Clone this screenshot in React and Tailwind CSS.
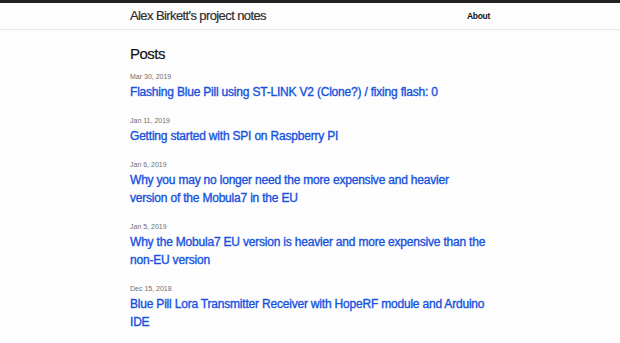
import React from 'react';

const posts = [
  { date: 'Mar 30, 2019', title: 'Flashing Blue Pill using ST-LINK V2 (Clone?) / fixing flash: 0' },
  { date: 'Jan 11, 2019', title: 'Getting started with SPI on Raspberry PI' },
  { date: 'Jan 6, 2019', title: 'Why you may no longer need the more expensive and heavier version of the Mobula7 in the EU' },
  { date: 'Jan 5, 2019', title: 'Why the Mobula7 EU version is heavier and more expensive than the non-EU version' },
  { date: 'Dec 15, 2018', title: 'Blue Pill Lora Transmitter Receiver with HopeRF module and Arduino IDE' },
];

export default function App() {
  return (
    <div className="min-h-screen bg-[#fdfdfd] text-[#111] font-['Liberation_Sans',Arial,sans-serif]">
      {/* Header */}
      <header className="border-t-[3px] border-[#222] border-b border-b-[#e8e8e8]">
        <div className="w-[360px] mx-auto h-[26px] flex items-center justify-between">
          <a href="#" className="text-[13px] tracking-[-0.6px] text-[#2f2f2f] [-webkit-text-stroke:0.2px]">
            Alex Birkett's project notes
          </a>
          <a href="#" className="text-[8.5px] font-bold text-[#111] tracking-[-0.3px]">About</a>
        </div>
      </header>

      {/* Posts */}
      <main className="w-[360px] mx-auto pt-[14px]">
        <h1 className="text-[15px] leading-[20px] tracking-[-0.5px] mb-[7px] [-webkit-text-stroke:0.2px]">Posts</h1>
        <ul className="flex flex-col gap-[14px] pr-[4px]">
          {posts.map((p) => (
            <li key={p.date}>
              <div className="text-[7px] leading-[12px] text-[#6f6f6f]">{p.date}</div>
              <a
                href="#"
                className="block text-[12px] leading-[18px] tracking-[-0.2px] text-[#1652e0] [-webkit-text-stroke:0.35px]"
              >
                {p.title}
              </a>
            </li>
          ))}
        </ul>
      </main>
    </div>
  );
}
